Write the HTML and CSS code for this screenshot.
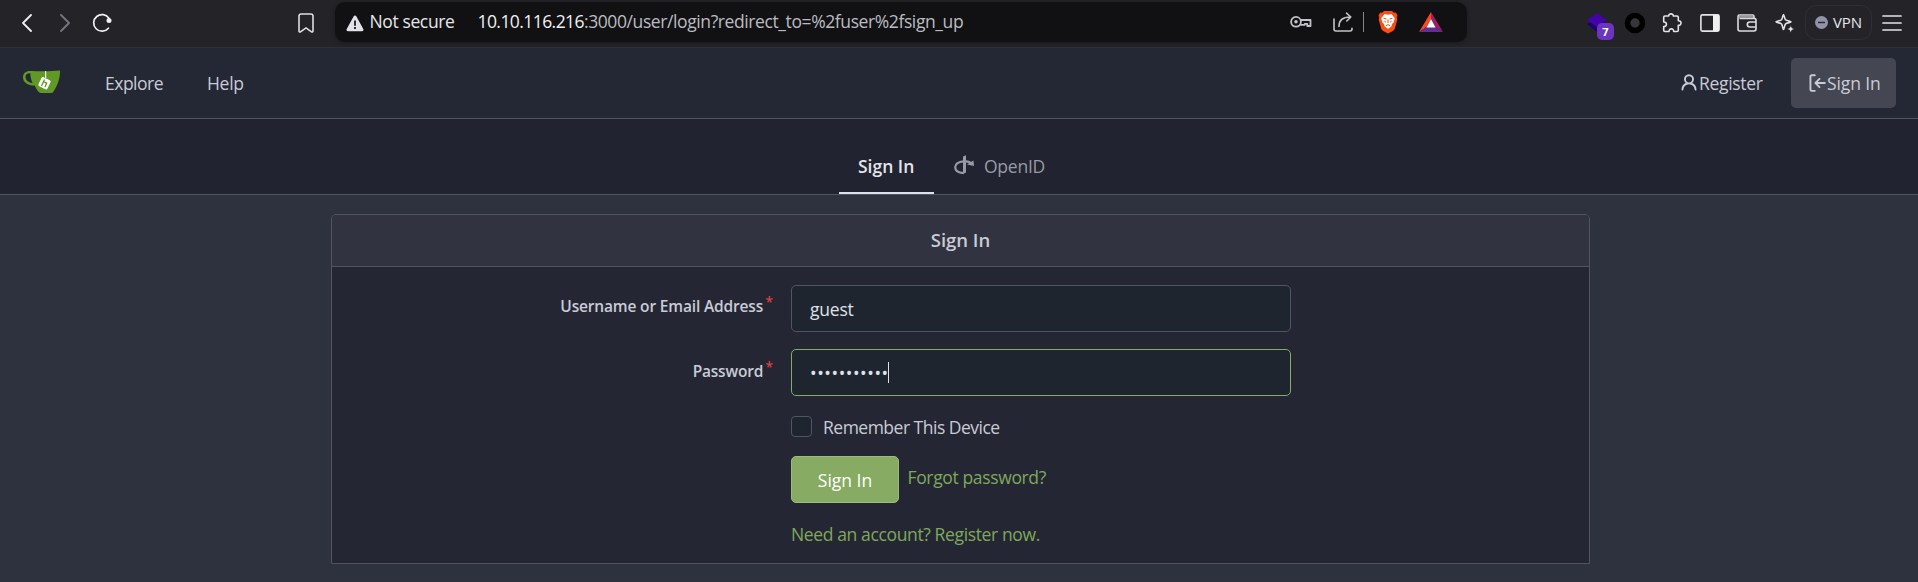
FILE: index.html
```html
<!DOCTYPE html>
<html lang="en">
<head>
<meta charset="utf-8">
<title>Sign In</title>
<link rel="stylesheet" href="styles.css">
</head>
<body>
<div class="toolbar">
  <div class="nav-icons">
    <svg class="icon back" width="12" height="18" viewBox="0 0 12 18"><path d="M10 1 2 9l8 8" fill="none" stroke="#f0f0f2" stroke-width="1.8" stroke-linecap="round" stroke-linejoin="round"/></svg>
    <svg class="icon forward" width="12" height="18" viewBox="0 0 12 18"><path d="m2 1 8 8-8 8" fill="none" stroke="#77767c" stroke-width="1.8" stroke-linecap="round" stroke-linejoin="round"/></svg>
    <svg class="icon reload" width="20" height="20" viewBox="0 0 20 20"><path d="M16.4 15.2A8.3 8.3 0 1 1 16.9 5.300" fill="none" stroke="#f0f0f2" stroke-width="1.7" stroke-linecap="round"/><circle cx="17" cy="7.500" r="2.500" fill="#f0f0f2"/></svg>
    <svg class="icon bookmark" width="16" height="20" viewBox="0 0 16 20"><path d="M1 3.200C1 1.900 1.900 1 3.200 1h9.600C14.100 1 15 1.900 15 3.200v14.900c0 .8-.9 1.200-1.500.7L8 14.900l-5.500 3.900c-.6.5-1.500.1-1.500-.7z" fill="none" stroke="#dddde2" stroke-width="1.600"/></svg>
  </div>
  <div class="address">
    <svg class="icon warn" width="18" height="17" viewBox="0 0 18 17"><path d="M7.700 1.300c.6-1 2-1 2.600 0l7 12.700c.6 1-.1 2.200-1.300 2.200H2c-1.200 0-1.900-1.200-1.300-2.200z" fill="#e3e2e8"/><path d="M9 5.500v5.200M9 12v2" stroke="#111114" stroke-width="1.700"/></svg>
    <span class="secure">Not secure</span>
    <span class="url"><span class="host">10.10.116.216</span>:3000/user/login?redirect_to=%2fuser%2fsign_up</span>
    <svg class="icon key" width="22" height="14" viewBox="0 0 22 14"><g fill="none" stroke="#c4c4c8" stroke-width="1.800" stroke-linejoin="round"><circle cx="6" cy="6.800" r="4.900"/><path d="M10.600 5H20.500v6h-3.200V8.800h-2.500v1H10.300"/></g><circle cx="6" cy="6.800" r="1.800" fill="#c4c4c8"/></svg>
    <svg class="icon share" width="20" height="20" viewBox="0 0 20 20"><path d="M1 7v10c0 1.200.8 2 2 2h14c1.200 0 2-.8 2-2v-.8M6 14.500c0-6.500 4-9.500 11-9.500M13.500 1.200 17.800 5l-4 4" fill="none" stroke="#c4c4c8" stroke-width="1.600" stroke-linecap="round" stroke-linejoin="round"/></svg>
    <span class="divider"></span>
    <svg class="icon brave" width="20" height="24" viewBox="0 0 20 24"><path d="M6 1h8l1.800 1.800 2-.3 1.700 3-.7 2 .5 2-2.400 8.800c-.3 1.200-1 1.900-2 2.600L10 23.500l-4.900-2.600c-1-.7-1.700-1.400-2-2.600L.7 9.500l.5-2-.7-2 1.700-3 2 .3z" fill="#fb4e12"/><path d="m6.500 4 3.500.8L13.500 4l3.300 4.200-1.300 4.300-1.500 1.500-.5 2.300L10 19l-3.500-2.700L6 14l-1.500-1.500-1.300-4.300z" fill="#fff"/><path d="m5.500 8.200 3 .8M11.500 9l3-.8M6.500 11.500l1.500.6m5.500-.6-1.500.6M10 9.500v3.500M8 15.800l2-1.200 2 1.200" fill="none" stroke="#fb4e12" stroke-width="1"/></svg>
    <svg class="icon bat" width="24" height="20" viewBox="0 0 24 20"><path d="M12 0v7L7.500 15 0 20z" fill="#ff4724"/><path d="m12 0 12 20-7.500-5L12 7z" fill="#9e1f63"/><path d="m0 20 7.500-5h9L24 20z" fill="#662d91"/><path d="m12 7 4.600 8.500H7.400z" fill="#fff"/></svg>
  </div>
  <div class="extensions">
    <div class="layers">
      <svg class="icon" width="22" height="20" viewBox="0 0 22 20"><path d="m1 11 10-5 10 5-10 8z" fill="#1d0070"/><path d="M11 0 21 7l-10 7L1 7z" fill="#4304a5"/></svg>
      <span class="badge">7</span>
    </div>
    <svg class="icon ring" width="22" height="22" viewBox="0 0 22 22"><circle cx="11" cy="11" r="7.500" fill="#37373b" stroke="#000" stroke-width="5.600"/></svg>
    <svg class="icon puzzle" width="20" height="20" viewBox="0 0 20 20"><path d="M3 3h3.700C6.500.2 11.500.2 11.300 3H15c.8 0 1.300.5 1.300 1.300v3.500c3.600-.4 3.600 5 0 4.600v4.800c0 .8-.5 1.300-1.300 1.300h-3.300c.2-3.500-4.900-3.500-4.700 0H3c-.8 0-1.300-.5-1.300-1.300v-3.600c3.700.2 3.700-4.800 0-4.600V4.300C1.700 3.500 2.200 3 3 3z" fill="none" stroke="#e4e4e8" stroke-width="1.600" stroke-linejoin="round"/></svg>
    <svg class="icon side" width="20" height="18" viewBox="0 0 20 18"><rect x=".9" y=".9" width="18.200" height="16.200" rx="1.500" fill="none" stroke="#e4e4e8" stroke-width="1.600"/><path d="M13 1h6v16h-6z" fill="#f0f0f3"/></svg>
    <svg class="icon wallet" width="20" height="18" viewBox="0 0 20 18"><path d="M17 4V2.500C17 1.500 16.500 1 15.500 1H2.500C1.500 1 1 1.500 1 2.500v12.600c0 1.100.8 1.900 1.900 1.900h14.200c1.100 0 1.900-.8 1.900-1.900V6.300c0-1.100-.8-1.900-1.900-1.900H2.500M19 8h-6.200c-3.300 0-3.300 5 0 5H19" fill="none" stroke="#dcdce0" stroke-width="1.600"/><path d="M2 1.500h14V4H2z" fill="#97979b"/></svg>
    <svg class="icon spark" width="20" height="20" viewBox="0 0 20 20"><path d="M8.500 1.500c.6 0 .9 4 2 5.200s5.500 1.400 5.500 2.100-4.400 1-5.500 2.200-1.300 5.500-2 5.500-.9-4.300-2-5.500S1 9.500 1 8.800s4.400-1 5.500-2.100 1.400-5.200 2-5.200z" fill="none" stroke="#e4e4e8" stroke-width="1.600" stroke-linejoin="round"/><path d="M15.800 12.500c.5 2.400.8 2.800 3.400 3.400-2.600.6-2.900 1-3.400 3.500-.6-2.500-.9-2.900-3.400-3.500 2.500-.6 2.800-1 3.400-3.400z" fill="#e4e4e8"/></svg>
    <div class="vpn"><svg class="icon" width="13" height="13" viewBox="0 0 13 13"><circle cx="6.500" cy="6.500" r="6.500" fill="#9194a8"/><path d="M3 6.500h7" stroke="#29292e" stroke-width="1.500"/></svg><span>VPN</span></div>
    <svg class="icon menu" width="20" height="16" viewBox="0 0 20 16"><path d="M1 1h18M1 8h18M1 15h18" stroke="#e4e4e8" stroke-width="1.700" stroke-linecap="round"/></svg>
  </div>
</div>

<nav class="navbar">
  <svg class="icon logo" width="38" height="24" viewBox="0 0 38 24"><path d="M7.500 1C15 1.400 30 1.400 37 .6c.4 7-2.500 15.500-6.500 20.800-.8 1-1.500 1.600-3 1.600h-9c-2.500 0-3.700-1.700-5-4-.6-1-1.200-2.200-1.800-3.400C4.500 15.500 0 12.500 0 7 .2 3.200 2.800.8 7.500 1z" fill="#609926"/><path d="M7.300 3.200c0 3.400.9 6.700 2.300 9.700C5.300 12.500 2.700 10.300 2.500 7c0-2.600 1.700-4.100 4.800-3.800z" fill="#242834"/><path d="M22.700 1v7" stroke="#fff" stroke-width="1"/><rect x="16.500" y="8.200" width="10" height="10" rx="1.600" transform="rotate(26 21.500 13.200)" fill="#fff"/><path d="m21.500 9.500-3 6.500m2-4.300 3.200 1.400-1.700 3.900" fill="none" stroke="#609926" stroke-width="1.300"/></svg>
  <a class="explore">Explore</a>
  <a class="help">Help</a>
  <a class="register"><svg class="icon" width="20" height="20" viewBox="0 0 16 16"><path fill="#c9cbd6" d="M10.561 8.073a6.005 6.005 0 0 1 3.432 5.142.75.75 0 1 1-1.498.07 4.500 4.500 0 0 0-8.990 0 .75.75 0 0 1-1.498-.07 6.004 6.004 0 0 1 3.431-5.142 3.999 3.999 0 1 1 5.123 0ZM10.500 5a2.500 2.500 0 1 0-5 0 2.500 2.500 0 0 0 5 0Z"/></svg><span>Register</span></a>
  <a class="signin"><svg class="icon" width="20" height="20" viewBox="0 0 16 16"><path fill="#c9cbd6" d="M2 2.750C2 1.784 2.784 1 3.750 1h2.500a.75.75 0 0 1 0 1.500h-2.500a.25.25 0 0 0-.25.25v10.500c0 .138.112.25.25.25h2.500a.75.75 0 0 1 0 1.500h-2.500A1.750 1.750 0 0 1 2 13.250Zm6.560 4.500h5.690a.75.75 0 0 1 0 1.500H8.560l1.970 1.970a.749.749 0 0 1-.326 1.275.749.749 0 0 1-.734-.215L6.220 8.530a.75.75 0 0 1 0-1.060l3.250-3.250a.749.749 0 0 1 1.275.326.749.749 0 0 1-.215.734L8.560 7.250Z"/></svg><span>Sign In</span></a>
</nav>

<div class="tabs">
  <a class="tab active"><span>Sign In</span></a>
  <a class="tab openid"><svg class="icon" width="20" height="20" viewBox="0 0 20 20"><path d="m9 1.500 3-1.300v17.300l-3 1.600z" fill="#989ba5"/><path d="M9.500 6.300C4.500 6.600 1.200 9 1.200 12.300c0 3.200 3.200 5.500 8.300 5.900M12 6.300c2 .2 3.600.8 5 1.700" fill="none" stroke="#989ba5" stroke-width="2.200"/><path d="m19.500 5.500.5 5.500-7-1.600z" fill="#989ba5"/></svg><span>OpenID</span></a>
</div>

<main class="page">
  <section class="panel">
    <h4 class="panel-title"><span>Sign In</span></h4>
    <form class="form">
      <div class="row">
        <label class="label"><span class="l-user">Username or Email Address</span><sup>*</sup></label>
        <div class="field"><span class="guest">guest</span></div>
      </div>
      <div class="row">
        <label class="label low"><span class="l-pass">Password</span><sup>*</sup></label>
        <div class="field focused"><span class="dots">•••••••••••</span><span class="caret"></span></div>
      </div>
      <div class="remember"><span class="checkbox"></span><span class="remember-text">Remember This Device</span></div>
      <div class="actions"><span class="submit"><span>Sign In</span></span><a class="forgot">Forgot password?</a></div>
      <div class="signup"><a class="need">Need an account? Register now.</a></div>
    </form>
  </section>
</main>
</body>
</html>
```
FILE: styles.css
```css
* { box-sizing: border-box; }
body {
  margin: 0;
  height: 582px;
  overflow: hidden;
  background: #2e313e;
  color: #c9cbd6;
  font: 17.5px/24px "Open Sans", "Noto Sans", sans-serif;
  white-space: nowrap;
}
.icon { display: block; flex: none; }

.toolbar {
  display: flex;
  height: 48px;
  background: #242328;
  border-bottom: 1px solid #303035;
}
.nav-icons { display: flex; align-items: center; width: 335px; height: 45px; flex: none; }
.back { margin-left: 21px; }
.forward { margin-left: 26px; }
.reload { margin-left: 21px; }
.bookmark { margin-left: 186px; }
.address {
  display: flex;
  align-items: center;
  width: 1132px;
  height: 40px;
  margin-top: 2px;
  flex: none;
  border-radius: 10px;
  background: #111113;
  box-shadow: 0 1px 4px #19191c;
}
.warn { margin-left: 11px; margin-top: 2px; }
.secure { width: 108px; margin-left: 5.500px; padding-bottom: 2px; color: #e6e6ea; letter-spacing: -0.380px; }
.url { width: 806px; padding-bottom: 2px; color: #bcbcc0; letter-spacing: -0.400px; }
.host { color: #f0f0f2; letter-spacing: -0.570px; }
.key { margin-left: 6.500px; }
.share { margin-left: 21px; }
.divider { width: 1px; height: 20px; margin-left: 10px; background: #85858a; }
.brave { margin-left: 14px; }
.bat { margin-left: 21px; }
.extensions { display: flex; align-items: center; height: 45px; padding-left: 119px; }
.layers { position: relative; width: 38px; height: 20px; }
.badge {
  position: absolute;
  left: 11px;
  top: 10px;
  width: 17px;
  height: 17px;
  border-radius: 5px;
  background: #6c35bd;
  color: #fff;
  font: bold 11px/18px "Open Sans", sans-serif;
  text-align: center;
}
.puzzle { margin-left: 16px; }
.side { margin-left: 18px; }
.wallet { margin-left: 17px; }
.spark { margin-left: 18px; }
.vpn {
  display: flex;
  align-items: center;
  width: 67px;
  height: 35px;
  margin: 0 10px;
  padding-left: 9px;
  border: 1px solid #2f2f34;
  border-radius: 11px;
  color: #e6e6ea;
  font-size: 15px;
}
.vpn span { margin-left: 5px; margin-top: -1px; letter-spacing: -0.100px; }

.navbar {
  display: flex;
  align-items: center;
  height: 71px;
  padding-left: 23px;
  padding-right: 22px;
  background: #242834;
  border-bottom: 1px solid #515463;
}
.logo { margin-top: -3px; }
.explore { width: 102px; margin-left: 44px; letter-spacing: -0.500px; }
.help { letter-spacing: -0.300px; }
.register { display: flex; align-items: center; margin-left: auto; letter-spacing: -0.330px; }
.signin {
  display: flex;
  align-items: center;
  width: 105px;
  height: 50px;
  margin-left: 28.500px;
  padding-left: 16px;
  border-radius: 5px;
  background: #444751;
  letter-spacing: -0.100px;
}

.tabs {
  display: flex;
  height: 76px;
  padding-left: 839px;
  padding-top: 20px;
  background: #212430;
  border-bottom: 1px solid #515463;
}
.tab { display: flex; align-items: center; height: 55px; color: #989ba5; }
.active { width: 95px; padding-left: 19px; padding-top: 1px; border-bottom: 2px solid #dfe0ee; color: #e4e5ea; font-weight: 600; }
.openid { padding-left: 20px; padding-bottom: 2px; letter-spacing: -0.250px; }
.openid .icon { margin-top: -2px; }
.openid span { margin-left: 10px; }

.page { padding: 19px 328px 0 331px; }
.panel { height: 350px; border: 1px solid #515463; border-radius: 5px 5px 0 0; background: #242733; }
.panel-title {
  height: 52px;
  margin: 0;
  border-bottom: 1px solid #515463;
  border-radius: 4px 4px 0 0;
  background: #313440;
  font-size: 18.5px;
  font-weight: 600;
  line-height: 49px;
  text-align: center;
}
.form { padding-top: 18px; }
.row { display: flex; height: 47px; margin-bottom: 17px; }
.label {
  display: flex;
  justify-content: flex-end;
  width: 441px;
  margin-right: 18px;
  padding-top: 9px;
  font-size: 15.5px;
  font-weight: 600;
}
.low { padding-top: 10px; }
.l-user { letter-spacing: -0.160px; }
.l-pass { letter-spacing: -0.200px; }
sup { margin: -4px 0 0 2.500px; color: #db3f3f; font-size: 13.5px; line-height: 24px; }
.field {
  display: flex;
  align-items: center;
  width: 500px;
  padding-left: 18px;
  border: 1px solid #515463;
  border-radius: 5px;
  background: #1f252f;
  color: #dfe1ea;
}
.focused { border-color: #87ab63; }
.guest { letter-spacing: -0.200px; }
.dots { letter-spacing: 0.580px; }
.caret { width: 1px; height: 21px; margin-left: -1px; background: #dfe1ea; }
.remember { display: flex; margin-left: 459px; padding-top: 3px; height: 43px; }
.checkbox { width: 21px; height: 21px; border: 1px solid #515463; border-radius: 4px; background: #1f252f; }
.remember-text { margin: -1px 0 0 11px; letter-spacing: -0.500px; }
.actions { display: flex; margin-left: 459px; height: 47px; }
.submit { width: 108px; border: 1px solid #9cbb7c; border-radius: 5px; background: #87ab63; color: #fff; line-height: 47px; text-align: center; }
.forgot { margin-left: 8.500px; line-height: 42px; color: #7fa85b; letter-spacing: -0.360px; }
.signup { margin: 19px 0 0 459px; }
.need { color: #7fa85b; letter-spacing: -0.370px; }
```
